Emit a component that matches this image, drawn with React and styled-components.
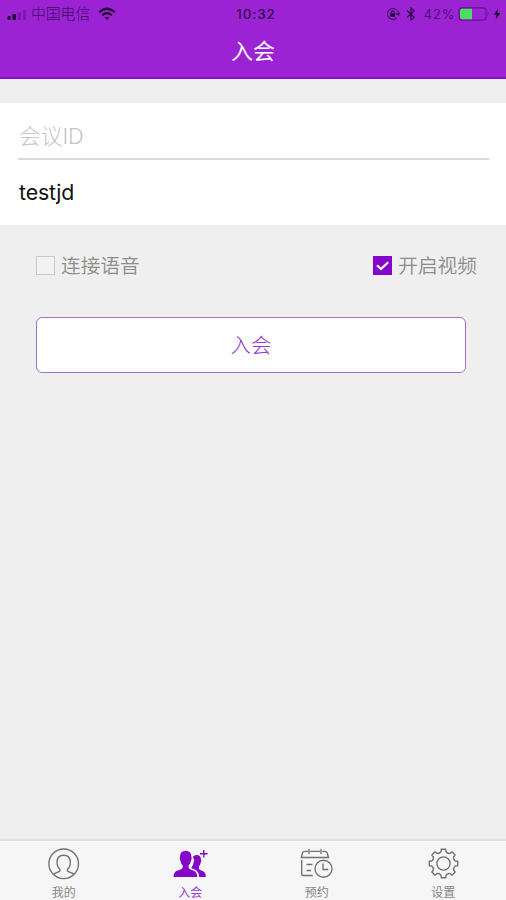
import React, { useState } from "react";
import styled, { createGlobalStyle } from "styled-components";

const GlobalStyle = createGlobalStyle`
  * { box-sizing: border-box; }
  body { margin: 0; background: #efefef; }
  button, input { font-family: inherit; }
`;

const Screen = styled.div`
  display: flex;
  flex-direction: column;
  height: 900px;
  background: #efefef;
  font-family: Inter, "Noto Sans CJK SC", sans-serif;
  overflow: hidden;
`;

const Header = styled.header`
  height: 79px;
  flex: none;
  background: #9b23d3;
  border-bottom: 2px solid #8c10c4;
`;

const StatusBar = styled.div`
  display: grid;
  grid-template-columns: 1fr auto 1fr;
  align-items: center;
  height: 26px;
  padding: 0 5px 0 7px;
  color: #3d0a62;
  font-size: 13.5px;
  line-height: 26px;
`;

const StatusGroup = styled.div`
  display: flex;
  align-items: center;
  justify-content: ${(p) => (p.$end ? "flex-end" : "flex-start")};
  svg { display: block; flex: none; }
`;

const IndicatorIcons = styled.div`
  display: flex;
  gap: 6px;
`;

const Carrier = styled.span`
  margin: 0 8px 0 4px;
  padding-top: 1px;
  font-size: 14.8px;
  font-weight: 300;
`;

const Clock = styled.span`
  padding-left: 4px;
  font-size: 13.5px;
  font-weight: 500;
  letter-spacing: 0.9px;
  color: #31064f;
`;

const Percent = styled.span`
  margin: 0 3px 0 8px;
  font-weight: 300;
  font-size: 13.6px;
  letter-spacing: 0.6px;
`;

const Charging = styled.span`
  margin-left: 3px;
`;

const Title = styled.h1`
  margin: 0;
  height: 51px;
  line-height: 51px;
  text-align: center;
  color: #fff;
  font-size: 22px;
  font-weight: 400;
`;

const Form = styled.section`
  margin-top: 24px;
  height: 122px;
  flex: none;
  padding: 0 17px 0 18px;
  background: #fff;
`;

const Field = styled.input`
  display: block;
  width: 100%;
  height: ${(p) => p.$height}px;
  padding: ${(p) => p.$pad};
  border: 0;
  border-bottom: ${(p) => (p.$line ? "2px solid #d9d9da" : "0")};
  border-radius: 0;
  outline: none;
  background: transparent;
  color: #111;
  font-size: ${(p) => p.$size}px;
  letter-spacing: ${(p) => p.$spacing}px;
  &::placeholder { color: #c5c5ca; opacity: 1; font-weight: 300; }
`;

const Options = styled.div`
  display: flex;
  justify-content: space-between;
  height: 39px;
  flex: none;
  margin: 20px 29px 0 36px;
`;

const Option = styled.button`
  display: flex;
  align-items: center;
  gap: 6px;
  padding: 0;
  border: 0;
  background: none;
  color: #8c8c8c;
  font-size: 19.7px;
  font-weight: 350;
`;

const Box = styled.span`
  display: flex;
  width: 19px;
  height: 19px;
  margin-top: 2px;
  border: 1px solid ${(p) => (p.$on ? "#8406c9" : "#c9c9c9")};
  background: ${(p) => (p.$on ? "#8406c9" : "#f2f2f2")};
`;

const JoinButton = styled.button`
  flex: none;
  height: 56px;
  margin: 33px 40px 0 36px;
  padding: 0 0 2px;
  border: 1.5px solid #a36fce;
  border-radius: 6px;
  background: #fff;
  color: #9638cc;
  font-size: 20.5px;
  font-weight: 300;
`;

const TabBar = styled.nav`
  display: grid;
  grid-template-columns: repeat(4, 1fr);
  height: 61px;
  flex: none;
  margin-top: auto;
  border-top: 2px solid #dfdfdf;
  background: #f6f6f6;
`;

const Tab = styled.button`
  display: flex;
  flex-direction: column;
  align-items: center;
  padding: 5px 0 0;
  border: 0;
  background: none;
  color: ${(p) => (p.$active ? "#9b3fce" : "#858585")};
  font-size: 12px;
  line-height: 18px;
  svg { display: block; color: ${(p) => (p.$active ? "#8406c9" : "#707070")}; }
`;

const TabLabel = styled.span`
  margin-top: 2px;
  padding-left: 1px;
`;

const Signal = () => (
  <svg width="20" height="14" fill="#240337">
    <rect x="0.5" y="9" width="3.2" height="4" rx="1" />
    <rect x="5.5" y="7" width="3.5" height="6" rx="1" />
    <g opacity="0.25">
      <rect x="10.8" y="5" width="3.2" height="8" rx="1" />
      <rect x="16" y="3" width="3.2" height="10" rx="1" />
    </g>
  </svg>
);

const Wifi = () => (
  <svg width="18" height="14" fill="none" stroke="#240337">
    <path d="M1.2 5.2Q9-1.8 16.8 5.2" strokeWidth="2.3" />
    <path d="M4.2 8.2Q9 4 13.8 8.2" strokeWidth="2" />
    <path d="M9 13 6.6 10.5Q9 8.8 11.4 10.5Z" fill="#240337" stroke="none" />
  </svg>
);

const RotationLock = () => (
  <svg width="14" height="14" fill="none" stroke="#3d0a62" strokeWidth="1.1">
    <path d="M11.2 3.5A5.5 5.5 0 1 0 11 10.7M12.3 4v4M10.4 6.2l1.9 2 1.5-2" />
    <rect x="4.2" y="6.3" width="5" height="3.5" fill="#240337" stroke="none" />
    <path d="M5.2 6.5V5.4a1.5 1.5 0 0 1 3 0v1.1" />
  </svg>
);

const Bluetooth = () => (
  <svg width="10" height="14" fill="none" stroke="#31064f" strokeWidth="1.2">
    <path d="M1 3.5 8.3 10.2 5 13V1l3.3 2.8L1 10.5" />
  </svg>
);

const Battery = () => (
  <svg width="32" height="14">
    <rect x="1" y="0.8" width="27" height="12.4" rx="3" fill="none" stroke="#681194" strokeWidth="1.2" />
    <path d="M2 4q0-2.200 2.200-2.200H14v10.400H4.200Q2 12.200 2 10Z" fill="#48df63" />
    <path d="M29.5 4.5q2.200 2.500 0 5Z" fill="#681194" />
  </svg>
);

const Bolt = () => (
  <svg width="8" height="12" fill="#18021f">
    <path d="M5 0.5 1 6.8h2.6L2.7 11.5 7.3 5H4.4Z" />
  </svg>
);

const Check = () => (
  <svg width="17" height="17" fill="none" stroke="#fff" strokeWidth="2.2">
    <path d="M3 8.2 7 12 14.2 5.3" />
  </svg>
);

const ProfileIcon = () => (
  <svg width="40" height="36" viewBox="0 0 40 36" fill="none" stroke="currentColor" strokeWidth="1.35">
    <circle cx="20.7" cy="17.8" r="14.8" />
    <path d="M10.5 28.5q1.4-1.6 4.4-2.4 2.5-.7 2-2.8c-2.2-2-3-4.4-2.8-7.6.2-4 2.6-6.5 6.6-6.5s6.400 2.500 6.600 6.500c.2 3.200-.6 5.600-2.800 7.600q-.5 2.100 2 2.800 3 .8 4.400 2.400" />
  </svg>
);

const GroupIcon = () => (
  <svg width="40" height="36" viewBox="0 0 40 36" fill="currentColor">
    <path d="M10 11q0-6.300 5.700-6.300T21.400 11q.8 1.200-.4 3.400-.7 3.600-2.400 4.800v2.500q.5 1.500 4.500 2.700 4 1.200 4.200 6.600H3.500q0-5.400 4.400-6.600 4.200-1.200 4.800-2.700v-2.500q-1.700-1.200-2.300-4.800-1.200-2.200-.4-3.400Z" />
    <path d="M22.600 12.200q.8-3.200 4.100-3.200 4.300 0 4.300 5.100.7 1-.3 2.500-.5 2.700-1.800 3.700v2.500q.7 1.200 3.600 2.200 3.300 1.200 3.400 6h-6.700q-.1-6-5.600-8l-2-.8v-1.200q1.700-1.700 2.100-5 1.200-2.200-.1-3.800Z" />
    <path d="M33.800 4v7.500M30 7.800h7.600" stroke="currentColor" strokeWidth="1.4" fill="none" />
  </svg>
);

const CalendarIcon = () => (
  <svg width="40" height="36" viewBox="0 0 40 36" fill="none" stroke="currentColor" strokeWidth="1.35">
    <path d="M12 5.300H9Q7.200 5.300 6.500 7L5.300 11.500H32.500L31.200 7Q30.500 5.300 28.600 5.300H26.300M14.200 5.300h9.800M13 3v5M25 3v5" />
    <path d="M5.700 14v14q0 1.500 1.500 1.500h9.500M10.500 18.500h6M10.500 24.500H15" />
    <circle cx="27.5" cy="22.7" r="8.5" />
    <path d="M27 17.500v6h5.300" />
  </svg>
);

const gearPath = Array.from({ length: 8 }, (_, i) => {
  const at = (deg, r) => {
    const a = ((i * 45 + deg) * Math.PI) / 180;
    return `${(20.5 + r * Math.cos(a)).toFixed(2)} ${(17.5 + r * Math.sin(a)).toFixed(2)}`;
  };
  return `${i ? "L" : "M"}${at(-9, 14.4)}L${at(9, 14.4)}L${at(12, 12)}Q${at(22.5, 10.6)} ${at(33, 12)}`;
}).join("") + "Z";

const GearIcon = () => (
  <svg width="40" height="36" viewBox="0 0 40 36" fill="none" stroke="currentColor" strokeWidth="1.35" strokeLinejoin="round">
    <path d={gearPath} />
    <circle cx="20.5" cy="17.5" r="6.6" />
  </svg>
);

const tabs = [
  { label: "我的", Icon: ProfileIcon },
  { label: "入会", Icon: GroupIcon },
  { label: "预约", Icon: CalendarIcon },
  { label: "设置", Icon: GearIcon },
];

export default function App() {
  const [audio, setAudio] = useState(false);
  const [video, setVideo] = useState(true);
  const [active, setActive] = useState(1);

  return (
    <Screen>
      <GlobalStyle />
      <Header>
        <StatusBar>
          <StatusGroup>
            <Signal />
            <Carrier>中国电信</Carrier>
            <Wifi />
          </StatusGroup>
          <Clock>10:32</Clock>
          <StatusGroup $end>
            <IndicatorIcons>
              <RotationLock />
              <Bluetooth />
            </IndicatorIcons>
            <Percent>42%</Percent>
            <Battery />
            <Charging>
              <Bolt />
            </Charging>
          </StatusGroup>
        </StatusBar>
        <Title>入会</Title>
      </Header>
      <Form>
        <Field placeholder="会议ID" $height={57} $pad="10px 1px 0" $size={21.7} $spacing={0} $line />
        <Field defaultValue="testjd" $height={64} $pad="0 1px" $size={21.3} $spacing={-0.1} />
      </Form>
      <Options>
        <Option onClick={() => setAudio(!audio)}>
          <Box $on={audio}>{audio && <Check />}</Box>
          连接语音
        </Option>
        <Option onClick={() => setVideo(!video)}>
          <Box $on={video}>{video && <Check />}</Box>
          开启视频
        </Option>
      </Options>
      <JoinButton>入会</JoinButton>
      <TabBar>
        {tabs.map(({ label, Icon }, i) => (
          <Tab key={label} $active={i === active} onClick={() => setActive(i)}>
            <Icon />
            <TabLabel>{label}</TabLabel>
          </Tab>
        ))}
      </TabBar>
    </Screen>
  );
}
